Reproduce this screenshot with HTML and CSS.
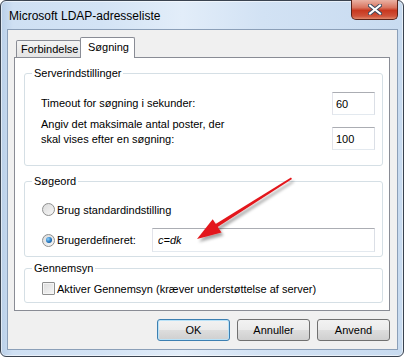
FILE: index.html
```html
<!DOCTYPE html>
<html lang="da">
<head>
<meta charset="UTF-8">
<meta name="viewport" content="width=device-width, initial-scale=1.0">
<title>Microsoft LDAP-adresseliste</title>
<link rel="stylesheet" href="styles.css">
</head>
<body>

<div class="screen">
  <div class="window">
    <div class="titlebar">
      <span class="title">Microsoft LDAP-adresseliste</span>
      <button class="close" type="button" aria-label="Luk">
        <svg width="14" height="11" viewBox="0 0 14 11">
          <path d="M2 1.5 L12 9.5 M12 1.5 L2 9.5" stroke="#3b4a5e" stroke-width="4" stroke-linecap="square"/>
          <path d="M2 1.5 L12 9.5 M12 1.5 L2 9.5" stroke="#fff" stroke-width="2" stroke-linecap="square"/>
        </svg>
      </button>
    </div>

    <div class="client">
      <div class="tabs">
        <div class="tab">Forbindelse</div>
        <div class="tab active">Søgning</div>
      </div>

      <div class="panel">
        <fieldset class="group group-server">
          <legend>Serverindstillinger</legend>
          <div class="group-body">
            <div class="row row-timeout">
              <label for="timeout">Timeout for søgning i sekunder:</label>
              <input class="field num" id="timeout" type="text" value="60">
            </div>
            <div class="row row-max">
              <label for="maxposts">Angiv det maksimale antal poster, der<br>skal vises efter en søgning:</label>
              <input class="field num" id="maxposts" type="text" value="100">
            </div>
          </div>
        </fieldset>

        <fieldset class="group group-search">
          <legend>Søgeord</legend>
          <div class="group-body">
            <div class="option">
              <span class="radio"></span>
              <span>Brug standardindstilling</span>
            </div>
            <div class="option option-custom">
              <span class="radio checked"></span>
              <span>Brugerdefineret:</span>
              <input class="field base" type="text" value="c=dk">
            </div>
          </div>
        </fieldset>

        <fieldset class="group group-browse">
          <legend>Gennemsyn</legend>
          <div class="group-body">
            <div class="option">
              <span class="check"></span>
              <span>Aktiver Gennemsyn (kræver understøttelse af server)</span>
            </div>
          </div>
        </fieldset>
      </div>

      <div class="buttons">
        <button class="btn btn-default" type="button">OK</button>
        <button class="btn" type="button">Annuller</button>
        <button class="btn" type="button">Anvend</button>
      </div>
    </div>
  </div>

  <!-- red annotation arrow -->
  <svg class="arrow" width="405" height="357" viewBox="0 0 405 357">
    <defs>
      <filter id="shade" x="-20%" y="-20%" width="140%" height="140%">
        <feDropShadow dx="2" dy="3" stdDeviation="1.5" flood-color="#000" flood-opacity="0.35"/>
      </filter>
    </defs>
    <g filter="url(#shade)">
      <path d="M291 177.5 L292 179 L216 228 L214 225 Z" fill="#e3171b"/>
      <path d="M197 239 L221.5 232.6 L212.7 219.2 Z" fill="#e3171b"/>
    </g>
  </svg>
</div>

</body>
</html>
```

FILE: styles.css
```css
body {
  margin: 0;
  background: #fff;
  font-family: "Liberation Sans", Arial, sans-serif;
  font-size: 11px;
  color: #000;
}

.screen {
  position: relative;
  width: 405px;
  height: 357px;
}

/* Window frame */
.window {
  box-sizing: border-box;
  width: 404px;
  height: 357px;
  border: 1px solid #3a4350;
  border-radius: 6px;
  background: linear-gradient(to right, #b9cfe8 0, #cfe0f3 3%, #d3e3f5 25%, #e2edf9 45%, #d2e2f4 65%, #c8dbf0 100%);
  box-shadow: inset 0 0 0 1px rgba(255, 255, 255, 0.55);
  display: flex;
  flex-direction: column;
}

.titlebar {
  height: 28px;
  display: flex;
  align-items: flex-start;
  padding-left: 8px;
}

.title {
  font-size: 12px;
  line-height: 14px;
  margin-top: 8px;
}

.close {
  margin: -1px 5px 0 auto;
  width: 47px;
  height: 20px;
  padding: 0;
  border: 1px solid #5a2218;
  border-top: none;
  border-radius: 0 0 5px 5px;
  background: linear-gradient(#eab2a4 0%, #d9745f 40%, #c8381f 55%, #d0533a 85%, #e08a6c 100%);
  display: flex;
  align-items: center;
  justify-content: center;
}

/* Client area */
.client {
  box-sizing: border-box;
  height: 321px;
  margin: 0 5px 0 6px;
  border: 1px solid #8b9fb8;
  background: #f0f0f0;
  padding: 7px 0 0 6px;
  display: flex;
  flex-direction: column;
}

.tabs {
  display: flex;
  align-items: flex-end;
  height: 21px;
  margin-bottom: -1px;
  padding-left: 2px;
}

.tab {
  box-sizing: border-box;
  width: 65px;
  height: 17px;
  margin-bottom: 1px;
  padding-left: 4px;
  border: 1px solid #898c95;
  border-bottom: none;
  border-radius: 2px 2px 0 0;
  background: linear-gradient(#f4f4f4, #e4e4e4);
  line-height: 16px;
}

.tab.active {
  position: relative;
  z-index: 1;
  width: 55px;
  height: 21px;
  margin-left: -1px;
  margin-bottom: 0;
  padding-left: 7px;
  background: #fff;
  line-height: 18px;
}

.panel {
  box-sizing: border-box;
  width: 376px;
  border: 1px solid #898c95;
  background: #fff;
  padding: 8px 6px 7px 9px;
}

/* Group boxes */
.group {
  margin: 0;
  min-width: 0;
  border: 1px solid #d5dfe5;
  border-radius: 3px;
  padding: 0 7px 0 7px;
}

.group legend {
  padding: 0 2px;
  line-height: 14px;
}

.group-body {
  padding-left: 9px;
}

.group-server {
  padding-top: 12px;
  padding-bottom: 15px;
}

.group-search {
  margin-top: 8px;
  padding-top: 14px;
  padding-bottom: 4px;
}

.group-browse {
  margin-top: 4px;
  padding-top: 6px;
  padding-bottom: 6px;
}

.row {
  display: flex;
  justify-content: space-between;
}

.row label {
  line-height: 15px;
}

.row-timeout {
  height: 23px;
  align-items: center;
}

.row-max {
  height: 33px;
  margin-top: 2px;
  align-items: flex-start;
}

.row-max .num {
  align-self: flex-end;
}

.field {
  box-sizing: border-box;
  height: 23px;
  margin: 0;
  padding: 0 3px;
  border: 1px solid #abadb3;
  border-color: #abadb3 #dbdfe6 #e3e9ef #e2e3ea;
  background: #fff;
  font: inherit;
  color: #000;
  outline: none;
}

.num {
  width: 43px;
}

.base {
  width: 223px;
  height: 24px;
  margin-left: auto;
  padding-left: 5px;
  font-style: italic;
}

/* Radio buttons and check box */
.option {
  display: flex;
  align-items: center;
  gap: 2px;
  height: 15px;
  padding-left: 1px;
}

.option-custom {
  height: 24px;
  margin-top: 11px;
}

.radio,
.check {
  box-sizing: border-box;
  flex: none;
  width: 13px;
  height: 13px;
  border: 1px solid #8e8f8f;
  background: linear-gradient(135deg, #dcdcdc, #f6f6f6);
}

.radio {
  border-radius: 50%;
  display: flex;
  align-items: center;
  justify-content: center;
}

.radio.checked::after {
  content: "";
  width: 6px;
  height: 6px;
  border-radius: 50%;
  background: radial-gradient(circle at 35% 35%, #8ad1ff, #1d6fb8 60%, #134d86);
}

.check {
  border-radius: 1px;
  box-shadow: inset 0 0 0 1px #f4f4f4;
}

/* Dialog buttons */
.buttons {
  display: flex;
  justify-content: flex-end;
  gap: 7px;
  margin-top: 8px;
  padding-right: 7px;
}

.btn {
  box-sizing: border-box;
  width: 73px;
  height: 22px;
  padding: 0;
  border: 1px solid #707070;
  border-radius: 3px;
  background: linear-gradient(#f2f2f2 0%, #ebebeb 48%, #dddddd 52%, #cfcfcf 100%);
  font: inherit;
  color: #000;
}

.btn-default {
  border-color: #3c7fb1;
  box-shadow: inset 0 0 0 1px #b9e2f8;
}

.arrow {
  position: absolute;
  left: 0;
  top: 0;
  pointer-events: none;
}
```
